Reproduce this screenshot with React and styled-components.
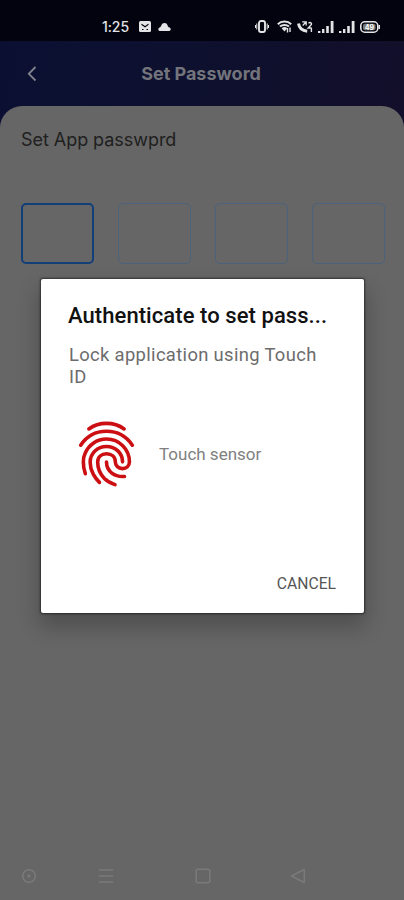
// Third party imports
import styled, { createGlobalStyle } from "styled-components";

const GlobalStyle = createGlobalStyle`
  * {
    box-sizing: border-box;
  }
  body {
    margin: 0;
    background: #666;
  }
`;

const Screen = styled.div`
  position: relative;
  display: flex;
  flex-direction: column;
  width: 404px;
  height: 900px;
  overflow: hidden;
  background: linear-gradient(100deg, #0b1033 0%, #0e102d 45%, #130f2b 75%, #0c1030 100%);
  font-family: Inter, "Liberation Sans", sans-serif;
`;

const StatusBar = styled.div`
  display: flex;
  align-items: center;
  flex: none;
  height: 41px;
  padding: 12px 24px 0 102px;
  background: #02030e;
  color: #e4e4e6;
`;

const Clock = styled.span`
  width: 37px;
  font-size: 14px;
  font-weight: 500;
  line-height: 16px;
  letter-spacing: -0.1px;
`;

const StatusIcons = styled.div`
  display: flex;
  align-items: center;
  gap: ${({ $gap }) => $gap}px;
  margin-left: ${({ $push }) => ($push ? "auto" : "0")};

  svg {
    display: block;
  }
`;

const Header = styled.header`
  display: grid;
  grid-template-columns: 64px 1fr 64px;
  align-items: center;
  flex: none;
  height: 65px;
`;

const BackButton = styled.button`
  display: flex;
  padding: 0 0 0 24px;
  border: none;
  background: none;
  color: #82838c;
`;

const Title = styled.h1`
  margin: 0 0 0 -2px;
  color: #73747c;
  font-size: 18px;
  font-weight: 700;
  line-height: 22px;
  text-align: center;
  white-space: nowrap;
`;

const Sheet = styled.main`
  display: flex;
  flex-direction: column;
  flex: 1;
  padding: 22px 19px 0 21px;
  border-radius: 22px 22px 0 0;
  background: #666;
`;

const Label = styled.p`
  margin: 0;
  color: #202020;
  font-size: 18px;
  line-height: 24px;
  letter-spacing: -0.05px;
  white-space: nowrap;
`;

const PinRow = styled.div`
  display: flex;
  justify-content: space-between;
  margin-top: 51px;
`;

const PinBox = styled.div`
  width: 73px;
  height: 61px;
  border: ${({ $active }) => ($active ? "2px solid #123f78" : "1px solid #4b627c")};
  border-radius: 5px;
`;

const NavBar = styled.nav`
  display: flex;
  align-items: center;
  height: 48px;
  margin: auto -19px 0 -21px;
  padding-left: 21px;
  color: #7a7a7a;

  svg {
    display: block;
  }
  svg:nth-child(2) {
    margin-left: 60px;
  }
  svg:nth-child(3) {
    margin-left: 80px;
  }
  svg:nth-child(4) {
    margin-left: 79px;
  }
`;

const Backdrop = styled.div`
  position: absolute;
  inset: 0;
  display: flex;
  align-items: flex-start;
  padding: 279px 40px 0 41px;
`;

const Dialog = styled.section`
  display: flex;
  flex-direction: column;
  width: 323px;
  height: 334px;
  padding: 24px 28px 16px;
  border-radius: 2px;
  background: #fff;
  box-shadow:
    0 0 2px 1px rgba(0, 0, 0, 0.5),
    0 12px 22px 2px rgba(0, 0, 0, 0.24);
  font-family: Roboto, "Liberation Sans", sans-serif;
`;

const DialogTitle = styled.h2`
  margin: 0 -10px 0 -1px;
  color: #111;
  font-size: 22px;
  font-weight: 500;
  line-height: 26px;
  letter-spacing: 0.07px;
  white-space: nowrap;
`;

const Description = styled.p`
  margin: 15px 0 0;
  color: #6c6c6c;
  font-size: 18.4px;
  line-height: 22px;
  letter-spacing: 0.34px;
`;

const Sensor = styled.div`
  display: flex;
  align-items: center;
  gap: 14px;
  height: 77px;
  margin: 27px 0 0 -1px;
  color: #808080;
  font-size: 17px;
`;

const CancelButton = styled.button`
  align-self: flex-end;
  margin-top: auto;
  padding: 0;
  border: none;
  background: none;
  color: #555;
  font-family: inherit;
  font-size: 15.7px;
  line-height: 26px;
`;

const MailIcon = () => (
  <svg width="12" height="11" viewBox="0 0 12 11">
    <rect width="12" height="11" rx="1.5" fill="currentColor" />
    <path d="M2.5 3.2 6 5.8 9.5 3.2M3 8.5h1.5M7.5 8.5H9" fill="none" stroke="#02030e" strokeWidth="1.1" />
  </svg>
);

const CloudIcon = () => (
  <svg width="13" height="9" viewBox="0 0 13 9">
    <path d="M1.6 9A1.9 1.9 0 0 1 1.6 5.4C2.8 4.8 3 4.6 3.4 3A3.3 3.3 0 0 1 9.6 3.2C9.8 4.6 10.4 5 11.6 5.6A1.8 1.8 0 0 1 11.5 9z" fill="currentColor" />
  </svg>
);

const VibrateIcon = () => (
  <svg width="14" height="13" viewBox="0 0 14 13" fill="none" stroke="currentColor">
    <rect x="4" y="1" width="6" height="11" rx="2" strokeWidth="1.9" />
    <path d="M1.8 3.5v6M12.2 3.5v6M.5 5v3M13.5 5v3" strokeWidth="1" />
  </svg>
);

const WifiIcon = () => (
  <svg width="15" height="13" viewBox="0 0 15 13" fill="none" stroke="currentColor">
    <path d="M.8 4.2C4.3.7 10.7.7 14.2 4.2M3 6.6c2.5-2.3 6.5-2.3 9 0" strokeWidth="2" />
    <path d="M4.6 8.2Q7.5 6 10.4 8.2L7.5 11.5z" fill="currentColor" stroke="none" />
    <path d="M10.5 8v4.5M13 7.5V12" strokeWidth="1.4" />
  </svg>
);

const CallIcon = () => (
  <svg width="16" height="13" viewBox="0 0 16 13" fill="none" stroke="currentColor">
    <path d="M1.5 3.5C2.2 8 5.5 10.8 10.2 11.2" strokeWidth="3" />
    <path d="M5.2 1.8h4v3.7M9 2 5.7 5.5" strokeWidth="1.3" />
    <path d="M11.5 3.2c2-1.8 4.2.3 2 2.4L11.2 8h3.5M14.4 8v4" strokeWidth="1.4" />
  </svg>
);

const SignalIcon = () => (
  <svg width="16" height="12" viewBox="0 0 16 12" fill="currentColor">
    <path d="M0 10h2.4v2H0zM4 8h2.4v4H4zM8.2 5h2.6v7H8.2zM12.7 0h2.8v12h-2.8z" />
  </svg>
);

const BatteryIcon = () => (
  <svg width="20" height="12" viewBox="0 0 20 12">
    <rect x=".8" y=".8" width="17" height="10.4" rx="4" fill="none" stroke="currentColor" strokeWidth="1.6" />
    <path d="M18.5 4h1.5v4h-1.5z" fill="currentColor" />
    <rect x="3" y="2.8" width="12.6" height="6.4" rx="2" fill="#777" />
    <text x="9.3" y="8.6" fill="#fff" fontSize="7" fontWeight="700" textAnchor="middle">
      49
    </text>
  </svg>
);

const FingerprintIcon = () => (
  <svg width="77" height="77" viewBox="0 0 24 24" fill="none" stroke="#cb0f12" strokeWidth="1.12" strokeLinecap="round">
    <path d="M6.5 4.35C8.1 3.15 9.9 2.6 12 2.6s3.9.55 5.5 1.75" />
    <path d="M3.95 9.4C5.8 6.6 8.6 5.05 12 5.05s6.2 1.55 8.05 4.35" />
    <path d="M5.4 18.3c-.5-1.4-.62-2.6-.62-3.64 0-1 .2-2 .59-2.8C6.5 9.3 9 7.5 12 7.5c4 0 7.15 3.2 7.15 7.1 0 1.2-.93 2.1-2.2 2.1s-2.2-.9-2.2-2.1c0-1.6-1.2-2.5-2.75-2.5s-2.75 1-2.75 2.6c0 2 .8 3.7 2.1 5.1 1 1 2.1 1.5 3.3 1.9" />
    <path d="M9.8 21c-.7-.7-1.3-1.4-1.9-2.5-.65-1.2-1-2.4-1-3.8 0-2.8 2.3-4.9 5.1-4.9s5 2.1 5 4.8" />
    <path d="M17.6 19.15C14.6 19.4 12 17.6 12 14.65" />
  </svg>
);

const App = () => {
  const pins = [true, false, false, false];

  return (
    <>
      <GlobalStyle />
      <Screen>
        <StatusBar>
          <Clock>1:25</Clock>
          <StatusIcons $gap={7}>
            <MailIcon />
            <CloudIcon />
          </StatusIcons>
          <StatusIcons $gap={8} $push>
            <VibrateIcon />
            <StatusIcons $gap={5}>
              <WifiIcon />
              <CallIcon />
              <SignalIcon />
              <SignalIcon />
              <BatteryIcon />
            </StatusIcons>
          </StatusIcons>
        </StatusBar>

        <Header>
          <BackButton type="button" aria-label="Back">
            <svg width="16" height="16" viewBox="0 0 16 16" fill="none" stroke="currentColor" strokeWidth="1.8">
              <path d="M11.5 1 4.8 7.8l6.7 6.7" />
            </svg>
          </BackButton>
          <Title>Set Password</Title>
        </Header>

        <Sheet>
          <Label>Set App passwprd</Label>
          <PinRow>
            {pins.map((active, index) => (
              <PinBox key={index} $active={active} />
            ))}
          </PinRow>

          <NavBar>
            <svg width="16" height="16" viewBox="0 0 16 16" fill="none" stroke="currentColor" strokeWidth="1.5">
              <circle cx="8" cy="8" r="6.3" />
              <circle cx="8" cy="8" r="1.6" fill="currentColor" stroke="none" />
            </svg>
            <svg width="18" height="16" viewBox="0 0 18 16" stroke="currentColor" strokeWidth="1.5">
              <path d="M2 2h14M2 8h14M2 14h14" />
            </svg>
            <svg width="16" height="16" viewBox="0 0 16 16" fill="none" stroke="currentColor" strokeWidth="1.5">
              <rect x="1.2" y="1.2" width="13.6" height="13.6" rx="2" />
            </svg>
            <svg width="16" height="16" viewBox="0 0 16 16" fill="none" stroke="currentColor" strokeWidth="1.5">
              <path d="M14.3 1.5v13L1.5 8z" strokeLinejoin="round" />
            </svg>
          </NavBar>
        </Sheet>

        <Backdrop>
          <Dialog role="dialog">
            <DialogTitle>Authenticate to set pass...</DialogTitle>
            <Description>Lock application using Touch ID</Description>
            <Sensor>
              <FingerprintIcon />
              <span>Touch sensor</span>
            </Sensor>
            <CancelButton type="button">CANCEL</CancelButton>
          </Dialog>
        </Backdrop>
      </Screen>
    </>
  );
};

export default App;
